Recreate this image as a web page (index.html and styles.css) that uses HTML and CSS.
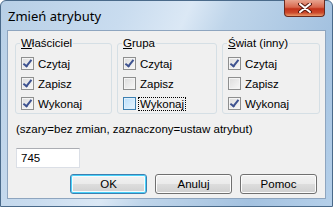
FILE: index.html
```html
<!DOCTYPE html>
<html lang="pl">
<head>
  <meta charset="UTF-8" />
  <title>Zmień atrybuty</title>
  <link rel="stylesheet" href="styles.css">
</head>
<body>
  <div class="window">
    <div class="titlebar">
      <span class="title">Zmień atrybuty</span>
      <button class="close" title="Zamknij">
        <svg width="14" height="10" viewBox="0 0 14 10">
          <path d="M2 1 L12 9 M12 1 L2 9" stroke="#5a1a10" stroke-width="4" stroke-linecap="round" />
          <path d="M2 1 L12 9 M12 1 L2 9" stroke="#fff" stroke-width="2" stroke-linecap="round" />
        </svg>
      </button>
    </div>
    <div class="client">
      <div class="groups">
        <fieldset class="group">
          <legend><u>W</u>łaściciel</legend>
          <label class="check"><span class="box checked"></span>Czytaj</label>
          <label class="check"><span class="box checked"></span>Zapisz</label>
          <label class="check"><span class="box checked"></span>Wykonaj</label>
        </fieldset>
        <fieldset class="group">
          <legend><u>G</u>rupa</legend>
          <label class="check"><span class="box checked"></span>Czytaj</label>
          <label class="check"><span class="box"></span>Zapisz</label>
          <label class="check"><span class="box hot"></span><span class="focus">Wykonaj</span></label>
        </fieldset>
        <fieldset class="group">
          <legend><u>Ś</u>wiat (inny)</legend>
          <label class="check"><span class="box checked"></span>Czytaj</label>
          <label class="check"><span class="box"></span>Zapisz</label>
          <label class="check"><span class="box checked"></span>Wykonaj</label>
        </fieldset>
      </div>
      <p class="hint">(szary=bez zmian, zaznaczony=ustaw atrybut)</p>
      <div class="mode">745</div>
      <div class="buttons">
        <button class="btn default">OK</button>
        <button class="btn">Anuluj</button>
        <button class="btn">Pomoc</button>
      </div>
    </div>
  </div>
</body>
</html>
```

FILE: styles.css
```css
body {
  margin: 0;
  font-family: 'Liberation Sans', Arial, sans-serif;
  font-size: 11.5px;
  color: #000;
}
.window {
  width: 333px;
  height: 207px;
  box-sizing: border-box;
  border: 1px solid #4a6a8a;
  border-radius: 6px 6px 0 0;
  background: linear-gradient(115deg, #b7cfe6 0%, #c9dcef 30%, #dbe8f5 45%, #bfd5ea 55%, #a4c2e0 80%, #b5d0ea 100%);
  padding: 0 6px 7px 6px;
  display: flex;
  flex-direction: column;
}
.titlebar {
  height: 29px;
  display: flex;
  align-items: flex-start;
  justify-content: space-between;
}
.title {
  font-family: 'Noto Sans', 'Open Sans', sans-serif;
  font-size: 13px;
  margin: 6px 0 0 1px;
  color: #000;
}
.close {
  width: 41px;
  height: 17px;
  margin-right: 1px;
  margin-top: -1px;
  border: 1px solid #6b2a1e;
  border-top: none;
  border-radius: 0 0 4px 4px;
  background: linear-gradient(#e8a48f 0%, #d8684e 45%, #c2321a 55%, #cc4a2c 80%, #ea9a6a 100%);
  padding: 0;
  display: flex;
  align-items: center;
  justify-content: center;
}
.client {
  flex: 1;
  background: #f0f0f0;
  border: 1px solid #8ea5bf;
  padding: 6px 5px 0 7px;
}
.groups {
  display: grid;
  grid-template-columns: 97px 100px 98px;
  gap: 5px;
}
.group {
  margin: 0;
  height: 77px;
  box-sizing: border-box;
  border: 1px solid #d5dfe5;
  border-radius: 3px;
  padding: 7px 0 0 5px;
  display: flex;
  flex-direction: column;
  gap: 7px;
}
.group legend {
  padding: 0 1px;
  margin-left: -1px;
  line-height: 13px;
}
.check {
  display: flex;
  align-items: center;
  gap: 4px;
  height: 13px;
}
.box {
  width: 11px;
  height: 11px;
  border: 1px solid #8e8f8f;
  background: linear-gradient(135deg, #dcdcdc, #f8f8f8);
  box-shadow: inset 0 0 0 1px #f4f4f4;
  position: relative;
}
.box.checked::after {
  content: '';
  position: absolute;
  left: 3px;
  top: 0;
  width: 3px;
  height: 7px;
  border: solid #3d5290;
  border-width: 0 2px 2px 0;
  transform: rotate(38deg);
}
.box.hot {
  border-color: #3c7fb1;
  background: linear-gradient(135deg, #b9defc, #e6f4fd);
  box-shadow: inset 0 0 0 1px #deeffc;
}
.focus {
  outline: 1px dotted #000;
  outline-offset: 0;
  padding: 0 1px;
  margin-left: -1px;
}
.hint {
  margin: 9px 0 0 1px;
  line-height: 13px;
}
.mode {
  width: 64px;
  height: 20px;
  box-sizing: border-box;
  margin: 12px 0 0 1px;
  background: #fff;
  border: 1px solid #dbdfe6;
  border-top-color: #abadb3;
  padding: 3px 4px;
  line-height: 13px;
}
.buttons {
  display: flex;
  justify-content: flex-end;
  gap: 8px;
  margin: 6px 3px 0 0;
}
.btn {
  width: 77px;
  height: 20px;
  font-family: inherit;
  font-size: 11.5px;
  border: 1px solid #707070;
  border-radius: 3px;
  background: linear-gradient(#f2f2f2 0%, #ebebeb 48%, #dddddd 52%, #cfcfcf 100%);
  box-shadow: inset 0 0 0 1px #fcfcfc;
  padding: 0;
}
.btn.default {
  border-color: #3c7fb1;
  box-shadow: inset 0 0 0 1px #48d1f9, inset 0 0 0 2px #f4fbfe;
}
```
